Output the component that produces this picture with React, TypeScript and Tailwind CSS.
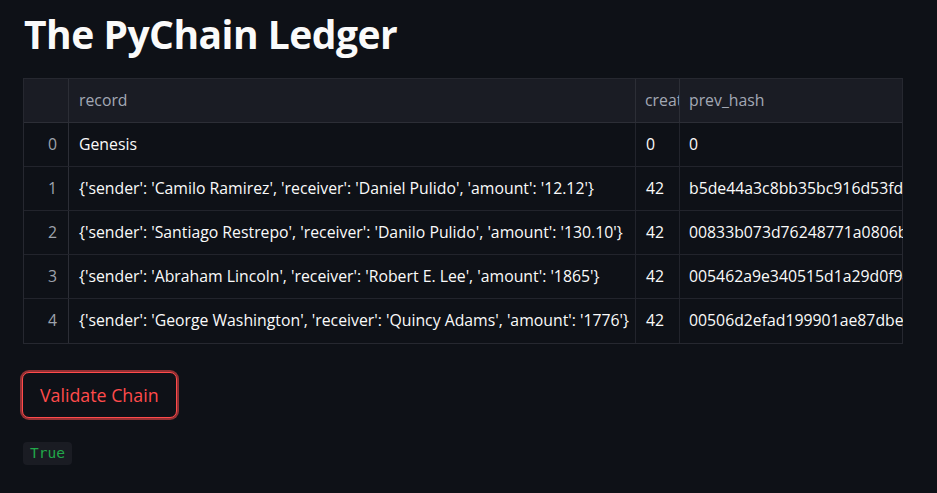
import React from 'react';

const rows = [
  { idx: 0, record: 'Genesis', created: '0', hash: '0' },
  {
    idx: 1,
    record: "{'sender': 'Camilo Ramirez', 'receiver': 'Daniel Pulido', 'amount': '12.12'}",
    created: '42',
    hash: 'b5de44a3c8bb35bc916d53fd2a7e1c0b4f9d8e6a3b2c1d0e',
  },
  {
    idx: 2,
    record: "{'sender': 'Santiago Restrepo', 'receiver': 'Danilo Pulido', 'amount': '130.10'}",
    created: '42',
    hash: '00833b073d76248771a0806b1c9e2f4a7d3b5c8e1f0a2b4c',
  },
  {
    idx: 3,
    record: "{'sender': 'Abraham Lincoln', 'receiver': 'Robert E. Lee', 'amount': '1865'}",
    created: '42',
    hash: '005462a9e340515d1a29d0f94e7c3b1a8d2f6e0c4b9a5d7e',
  },
  {
    idx: 4,
    record: "{'sender': 'George Washington', 'receiver': 'Quincy Adams', 'amount': '1776'}",
    created: '42',
    hash: '00506d2efad199901ae87dbe1f3c5a7b9d2e4f6a8c0b1d3e',
  },
];

const cols = 'grid grid-cols-[45px_567px_44px_223px]';

export default function App() {
  return (
    <div className="min-h-[493px] bg-[#0e1117] text-[#fafafa] font-['Open_Sans',sans-serif] px-[23px] pt-[8px]">
      <h1 className="text-[39px] font-bold leading-[52px] tracking-[-0.5px] pl-[1px]">The PyChain Ledger</h1>

      {/* dataframe */}
      <div className="mt-[18px] w-[880px] border border-[#262830] text-[15.8px]">
        <div className={`${cols} h-[44px] bg-[#1a1c24] text-[#a3a8b4] border-b border-[#2c2e36]`}>
          <div className="border-r border-[#2c2e36]" />
          <div className="flex items-center px-[10px] border-r border-[#2c2e36]">record</div>
          <div className="flex items-center pl-[9px] overflow-hidden whitespace-nowrap border-r border-[#2c2e36]">
            <span className="block overflow-hidden">created</span>
          </div>
          <div className="flex items-center px-[9px]">prev_hash</div>
        </div>
        {rows.map((r, i) => (
          <div
            key={r.idx}
            className={`${cols} h-[44px] ${i < rows.length - 1 ? 'border-b border-[#22242c]' : ''}`}
          >
            <div className="flex items-center justify-end pr-[11px] text-[#9ea3ad] border-r border-[#2c2e36]">
              {r.idx}
            </div>
            <div className="flex items-center px-[10px] whitespace-nowrap overflow-hidden border-r border-[#22242c]">
              {r.record}
            </div>
            <div className="flex items-center px-[10px] border-r border-[#22242c]">{r.created}</div>
            <div className="flex items-center pl-[9px] whitespace-nowrap overflow-hidden">{r.hash}</div>
          </div>
        ))}
      </div>

      <button className="mt-[28px] ml-[-1px] h-[46px] px-[17px] rounded-[7px] border border-[#ff4b4b] bg-[#0e1117] text-[#ff4b4b] text-[17.8px] shadow-[0_0_0_2px_rgba(255,75,75,0.55)]">
        Validate Chain
      </button>

      <div className="mt-[22px]">
        <code className="inline-block rounded-[4px] bg-[#1a1c23] px-[7px] py-[2px] text-[14.5px] leading-[19px] text-[#21a84a] font-['DejaVu_Sans_Mono',monospace]">
          True
        </code>
      </div>
    </div>
  );
}
